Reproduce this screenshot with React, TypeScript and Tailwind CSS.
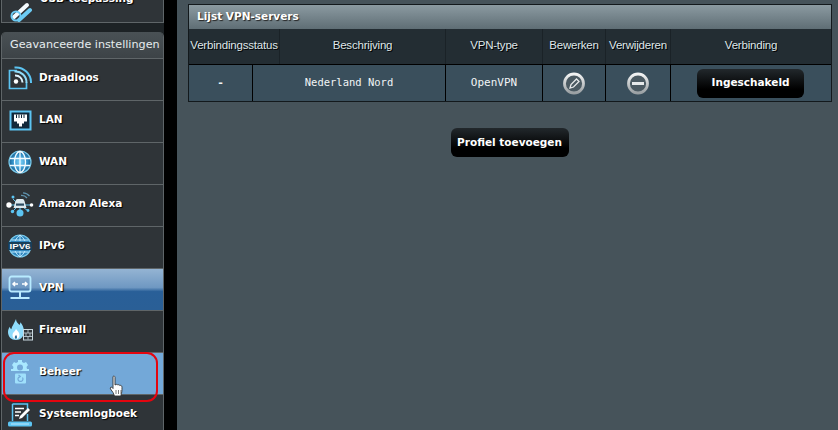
import React from "react";

const B = "#5cc4f2";

const Wifi = () => (
  <svg width="25" height="24" viewBox="0 0 25 24" fill="none" stroke={B}>
    <path d="M9 4.500H1.500v18h17v-6" strokeWidth="1.700" />
    <circle cx="8" cy="15.500" r="2.200" fill="#fff" stroke="none" />
    <path d="M7 9.500a7 7 0 0 1 7.500 7" stroke="#dff5ff" strokeWidth="2" />
    <path d="M6.500 5.500a11 11 0 0 1 12 11.500" strokeWidth="2" stroke="#8edaf8" />
    <path d="M6.500 1.500a15 15 0 0 1 16.500 15.500" strokeWidth="2" />
  </svg>
);
const Lan = () => (
  <svg width="23" height="21" viewBox="0 0 23 21">
    <rect x="0.500" y="0.500" width="22" height="20" fill={B} />
    <rect x="2.500" y="2.500" width="18" height="16" fill="#11283a" />
    <path d="M5 4.500h13v7h-3v2h-2v3h-3v-3H8v-2H5z" fill="#fff" />
    <path d="M7.500 4.500v3.500M10 4.500v3.500M12.500 4.500v3.500M15 4.500v3.500" stroke="#11283a" strokeWidth="1" />
  </svg>
);
const Globe = () => (
  <svg width="24" height="24" viewBox="0 0 24 24" fill="none">
    <defs>
      <radialGradient id="gl">
        <stop offset="0" stopColor="#7fd4fa" />
        <stop offset="0.7" stopColor="#2f8cc4" />
        <stop offset="1" stopColor="#1c5f8c" />
      </radialGradient>
    </defs>
    <circle cx="12" cy="12" r="11" fill="url(#gl)" stroke="#79c9ea" strokeWidth="1.200" />
    <g stroke="#f2fbff" strokeWidth="1.300">
      <ellipse cx="12" cy="12" rx="5.500" ry="10.500" />
      <path d="M12 1.500v21M2 8.500h20M2 15.500h20" />
    </g>
  </svg>
);
const Alexa = () => (
  <svg width="28" height="25" viewBox="0 0 28 25" fill="none">
    <path d="M4 13H24M14 13v8M7 7l3 3M7 19l3-3M21 18l-3-2" stroke={B} strokeWidth="1" />
    <circle cx="3" cy="13" r="2.700" fill="#fff" />
    <circle cx="25.500" cy="13" r="1.800" fill="#fff" />
    <path d="M7.500 16l2-7q.5-2 2-2h5q1.500 0 2 2l2 7z" fill="#dce9ef" />
    <rect x="10" y="11.500" width="8" height="2.200" fill="#2b4a60" />
    <circle cx="14" cy="21" r="3.500" fill={B} />
    <circle cx="7" cy="5" r="1.500" fill={B} />
    <circle cx="6.500" cy="19.500" r="1.700" fill={B} />
    <circle cx="22" cy="18.500" r="1.400" fill={B} />
    <path d="M15 3.500a7 7 0 0 1 6 2.500M17 .8a9 9 0 0 1 6.500 3.200" stroke="#5f92ad" strokeWidth="1.300" />
  </svg>
);
const Ipv6 = () => (
  <svg width="24" height="24" viewBox="0 0 24 24" fill="none">
    <circle cx="12" cy="12" r="11" fill="#2f86bd" stroke="#79c9ea" strokeWidth="1.200" />
    <path d="M3.500 6h17M3.500 18h17M12 1v6M12 17v6M7 7q2-4 5-6q3 2 5 6M7 17q2 4 5 6q3-2 5-6" stroke="#bfeaff" strokeWidth="1" />
    <rect x="0" y="8" width="24" height="8" fill="#173f59" />
    <text x="12" y="15" textAnchor="middle" fontFamily="'Liberation Sans',sans-serif" fontWeight="700" fontSize="8" fill="#fff" textLength="21" lengthAdjust="spacingAndGlyphs">IPV6</text>
  </svg>
);
const Vpn = () => (
  <svg width="24" height="26" viewBox="0 0 24 26" fill="none">
    <rect x="1.500" y="1.500" width="21" height="15" rx="2" stroke="#b8ebff" strokeWidth="1.800" />
    <path d="M5 9h5M7 7l-2 2 2 2M14 9h5M17 7l2 2-2 2" stroke="#fff" strokeWidth="1.500" />
    <path d="M12 17v5M2.500 23h19" stroke="#b8ebff" strokeWidth="2" />
  </svg>
);
const Fire = () => (
  <svg width="25" height="22" viewBox="0 0 25 22" fill="none">
    <path d="M8 0c0 3 2 4 3.500 6 .6-1 .8-1.800.8-2.800 2 2 3.700 5.300 3.700 9.300 0 5-3.500 8.500-8 8.500s-8-3-8-8c0-2 1-4 1.800-5.200.2 1.300.7 2 1.500 2.500C4 7 6.500 4 8 0z" fill="#8fdcfb" />
    <path d="M8 10c1.500 2 3.500 3.300 3.500 6 0 2.500-1.700 4-3.500 4s-3.500-1.500-3.500-4c0-2.500 2.500-3.500 3.500-6z" fill="#fff" />
    <path d="M8 16c.8.800 1 1.400 1 2.200 0 1-.5 1.600-1 1.600s-1.200-.6-1.200-1.600c0-1 .8-1.400 1.200-2.200z" fill="#2b6e96" />
    <rect x="15.500" y="10.500" width="9" height="10.500" stroke="#c9d8df" strokeWidth="1" fill="#2f3438" />
    <path d="M16 14h8M16 17.500h8M20 11v3M18 14v3.500M22 14v3.500M20 17.500v3" stroke="#c9d8df" strokeWidth="0.800" />
  </svg>
);
const Gear = () => (
  <svg width="18" height="24" viewBox="0 0 18 24" fill="none">
    <path d="M7 0h4v2l2 1 2-1 2 3-1.500 2 .5 2H18v2H0V9h2l.5-2L1 5l2-3 2 1 2-1z" fill="#a9e8ff" />
    <rect x="6" y="4.500" width="6" height="6" rx="3" fill="#73a8d8" />
    <rect x="4" y="13.500" width="11" height="10" rx="1" fill="#9fe0fb" />
    <path d="M11.500 17.500a2.500 2.500 0 1 1-2.500-1M7.500 15l1.800 1.400-1.800 1.400" stroke="#73a8d8" strokeWidth="1.200" />
  </svg>
);
const Log = () => (
  <svg width="24" height="25" viewBox="0 0 24 25" fill="none">
    <path d="M4.500 2h15v5M4.500 2v17" stroke={B} strokeWidth="1.500" />
    <path d="M7 6.500h9M7 10h6M7 13.500h4" stroke="#fff" strokeWidth="1.400" />
    <path d="M11 17l1-3 8-8 2 2-8 8z" fill="#fff" />
    <path d="M19.500 12v7" stroke={B} strokeWidth="1.500" />
    <rect x="0" y="19.500" width="24" height="5" rx="1.500" fill={B} />
    <path d="M3 22h18" stroke="#d9f3ff" strokeWidth="0.800" />
  </svg>
);
const Usb = () => (
  <svg width="24" height="24" viewBox="0 0 24 24" fill="none" className="shrink-0">
    <path d="M4 18L17 6" stroke="#f4fbff" strokeWidth="4" strokeLinecap="round" />
    <path d="M9 21l11-10" stroke="#6ccbf4" strokeWidth="4" strokeLinecap="round" />
    <circle cx="6" cy="17" r="4.500" stroke="#6ccbf4" strokeWidth="2" />
  </svg>
);

const items: { label: string; icon: React.ReactNode; kind?: "vpn" | "hover" }[] = [
  { label: "Draadloos", icon: <Wifi /> },
  { label: "LAN", icon: <Lan /> },
  { label: "WAN", icon: <Globe /> },
  { label: "Amazon Alexa", icon: <Alexa /> },
  { label: "IPv6", icon: <Ipv6 /> },
  { label: "VPN", icon: <Vpn />, kind: "vpn" },
  { label: "Firewall", icon: <Fire /> },
  { label: "Beheer", icon: <Gear />, kind: "hover" },
  { label: "Systeemlogboek", icon: <Log /> },
];

const labelCls =
  "font-['DejaVu_Sans',sans-serif] font-bold text-[10.500px] text-white whitespace-nowrap [text-shadow:1px_1px_1px_#000]";

function Row({ label, icon, kind }: (typeof items)[number]) {
  const bg =
    kind === "vpn"
      ? "bg-[linear-gradient(#94b4d3_0%,#6f98c2_45%,#295f98_55%,#2a5f96_100%)]"
      : kind === "hover"
        ? "bg-[#73a8d8]"
        : "bg-[#2f3438]";
  return (
    <div className={`relative h-[42px] shrink-0 flex items-center pb-[3px] border-b border-[#5f6568] ${bg}`}>
      <div className="w-[36px] mr-px flex justify-center shrink-0">{icon}</div>
      <span className={labelCls}>{label}</span>
    </div>
  );
}

const thCls =
  "flex items-center justify-center pb-px border-r border-[#1a2227] font-['Liberation_Sans',sans-serif] text-[11.500px] text-[#dfe6e9] tracking-[-0.2px] [text-shadow:1px_1px_0_#000]";
const tdCls =
  "flex items-center justify-center border-r border-black font-['DejaVu_Sans_Mono',monospace] text-[#f1f5f6]";
const btnCls =
  "flex items-center justify-center rounded-[6px] bg-[linear-gradient(#22282c,#000_70%)] font-['DejaVu_Sans',sans-serif] font-bold text-[10.500px] text-white whitespace-nowrap";

const RoundIcon = ({ id, children }: { id: string; children: React.ReactNode }) => (
  <svg width="24" height="24" viewBox="0 0 24 24" fill="none">
    <defs>
      <linearGradient id={id} x1="0" y1="0" x2="0" y2="1">
        <stop offset="0" stopColor="#f2f3f3" />
        <stop offset="1" stopColor="#9aa0a3" />
      </linearGradient>
    </defs>
    <circle cx="12" cy="12.500" r="9.500" fill="#4b5a62" stroke={`url(#${id})`} strokeWidth="2.800" />
    {children}
  </svg>
);

export default function App() {
  return (
    <div className="relative w-[838px] h-[430px] overflow-hidden flex bg-[#1d2225]">
      <aside className="w-[164px] h-[430px] pl-px shrink-0 flex flex-col">
        <div className="relative h-[23px] shrink-0 overflow-hidden border-x border-b border-[#5f6568] bg-[#2f3438]">
          <div className="absolute left-[8px] bottom-[-1px]"><Usb /></div>
          <span className={`${labelCls} absolute left-[38px] top-[-9px] leading-[14px]`}>USB-toepassing</span>
        </div>
        <div className="h-[9px] shrink-0" />
        <div className="flex-1 min-h-0 flex flex-col border-x border-[#5f6568] rounded-t-[5px] overflow-hidden">
          <div className="h-[27px] shrink-0 pl-[8px] flex items-center bg-[linear-gradient(#4a5155,#3d4347)] border-b border-[#5f6568] font-['DejaVu_Sans',sans-serif] text-[11.200px] whitespace-nowrap text-[#e6ecee]">
            Geavanceerde instellingen
          </div>
          {items.map((it) => (
            <Row key={it.label} {...it} />
          ))}
        </div>
      </aside>
      <div className="w-[13px] shrink-0 bg-black" />
      <main className="flex-1 bg-[#46535a] pl-[11px] pr-[6px] pt-[4px]">
        <section className="border border-[#13191c]">
          <div className="h-[24px] pl-[8px] flex items-center bg-[linear-gradient(#8b9aa1,#5f6e75)] font-['DejaVu_Sans',sans-serif] font-bold text-[10.500px] text-white [text-shadow:1px_1px_1px_#222]">
            Lijst VPN-servers
          </div>
          <div className="h-[36px] flex bg-[#232d33] border-b border-black">
            <div className={`${thCls} w-[91px]`}>Verbindingsstatus</div>
            <div className={`${thCls} w-[166px]`}>Beschrijving</div>
            <div className={`${thCls} w-[97px]`}>VPN-type</div>
            <div className={`${thCls} w-[63px]`}>Bewerken</div>
            <div className={`${thCls} w-[65px]`}>Verwijderen</div>
            <div className={`${thCls} flex-1 border-r-0`}>Verbinding</div>
          </div>
          <div className="h-[36px] flex bg-[#3a4f5c]">
            <div className={`${tdCls} w-[64px] text-[11px] font-bold`}>-</div>
            <div className={`${tdCls} w-[193px] text-[10.500px]`}>Nederland Nord</div>
            <div className={`${tdCls} w-[97px] text-[11px]`}>OpenVPN</div>
            <div className={`${tdCls} w-[63px]`}>
              <RoundIcon id="ri1">
                <path d="M8 17l1-3.500 5.500-5.500 2.500 2.500-5.500 5.500z" stroke="#e6e9ea" strokeWidth="1.300" />
              </RoundIcon>
            </div>
            <div className={`${tdCls} w-[65px]`}>
              <RoundIcon id="ri2">
                <rect x="6" y="11" width="12" height="3" fill="#e6e9ea" />
              </RoundIcon>
            </div>
            <div className="flex-1 flex items-center justify-center pr-[1px]">
              <div className={`${btnCls} w-[107px] h-[29px]`}>Ingeschakeld</div>
            </div>
          </div>
        </section>
        <div className="flex justify-center pt-[26px] pr-[1px]">
          <div className={`${btnCls} w-[118px] h-[29px]`}>Profiel toevoegen</div>
        </div>
      </main>

      <div className="absolute left-[3px] top-[352px] w-[155px] h-[50px] rounded-[11px] border-2 border-[#e4050f] pointer-events-none" />
      <svg className="absolute left-[109px] top-[375px]" width="16" height="23" viewBox="0 0 16 23">
        <path
          d="M4 1.500c1-.8 2-.3 2 1V10l1-.5c1-.4 1.500.1 1.800.5.7-.5 1.700-.3 2 .5.8-.4 1.700 0 2 .8.400 1 .200 5-.300 7l-.700 2.700H5.500L4 17.500 1.500 14c-.8-1.300.5-2.500 1.700-1.500L4 13.500z"
          fill="#fff"
          stroke="#333"
          strokeWidth="0.900"
        />
        <path d="M7 15v4M9.500 15v4M12 15v4" stroke="#555" strokeWidth="0.800" />
      </svg>
    </div>
  );
}
